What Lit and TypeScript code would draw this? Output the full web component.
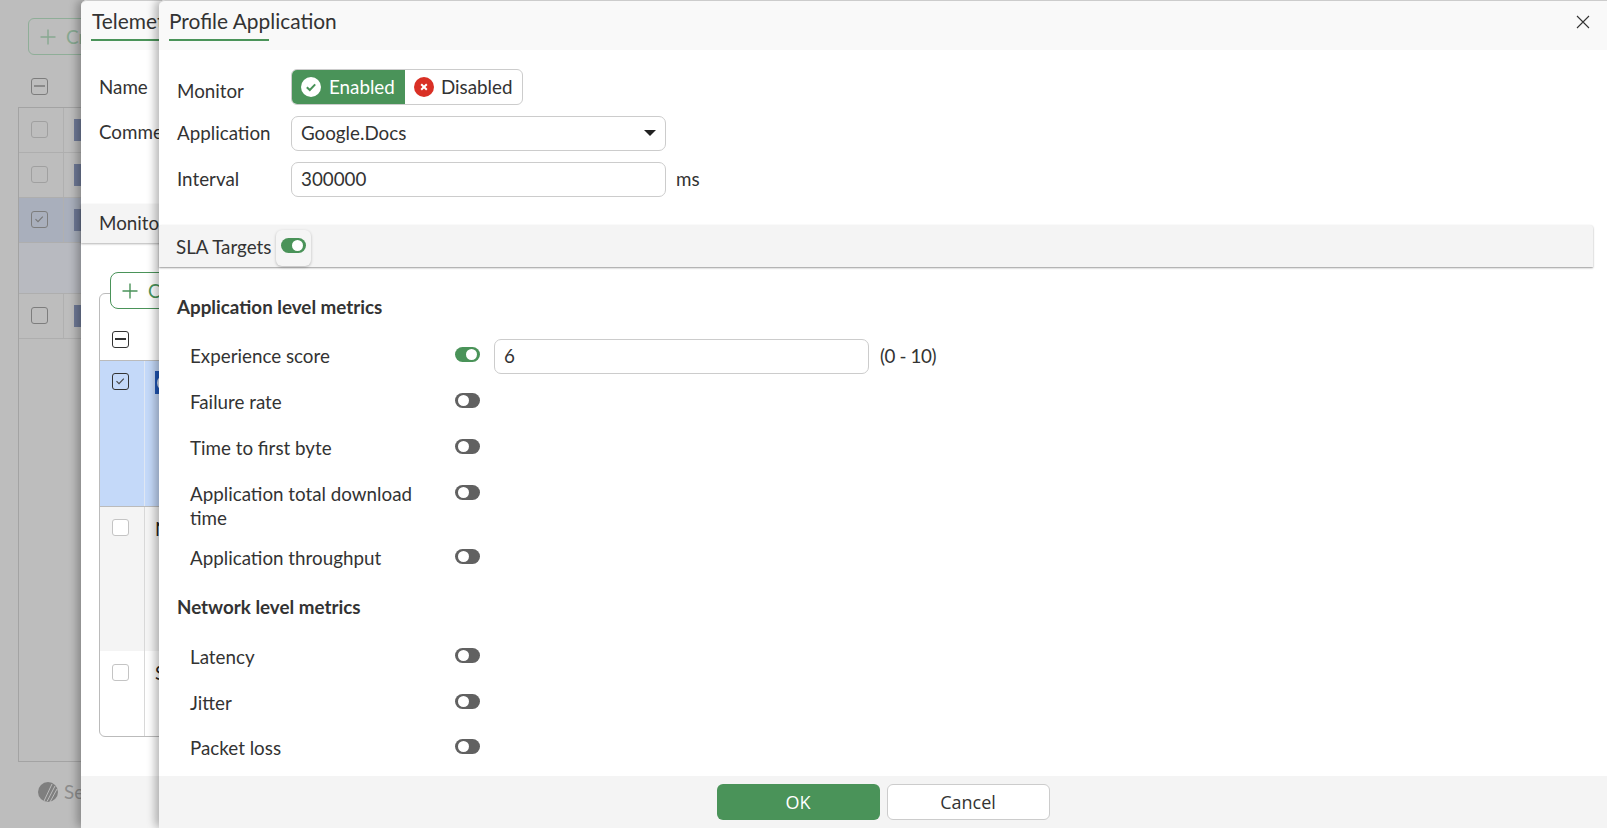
import { LitElement, html, css, svg } from "lit";
import { customElement } from "lit/decorators.js";

const plus = svg`<svg class="plus" width="20" height="20" viewBox="0 0 20 20" fill="none" stroke="currentColor" stroke-width="1.4"><path d="M10 2.5v15M2.5 10h15"/></svg>`;

@customElement("app-root")
export class AppRoot extends LitElement {
  static styles = css`
    :host { display: block; position: relative; width: 1607px; height: 828px; overflow: hidden; font-family: Lato, sans-serif; font-size: 18.8px; line-height: 24px; color: #333; background: #bdbdbd; }
    * { box-sizing: border-box; }
    .plus { flex: none; display: block; }

    /* page behind the drawers */
    .page { display: flex; flex-direction: column; height: 828px; padding: 18px 0 0 18px; color: #8a8a8a; }
    .create { width: 120px; height: 37px; margin-left: 10px; border: 1px solid #8fae98; border-radius: 6px; display: flex; align-items: center; gap: 8px; padding-left: 9px; color: #87a890; white-space: nowrap; }
    .page-head { height: 52px; padding: 23px 0 0 13px; }
    .bgtable { width: 300px; height: 655px; border: 1px solid #a3a3a3; border-right: 0; }
    .bgrow { display: flex; border-bottom: 1px solid #aeaeae; height: 45px; }
    .bgrow.sel { background: #a9afbc; }
    .bgrow.sub { background: #b8bac0; height: 51px; }
    .bgrow .c1 { width: 45px; padding: 12.5px 0 0 12px; border-right: 1px solid #b0b0b0; }
    .bgrow .chip { width: 10px; height: 22px; margin: 11px 0 0 10px; background: #6f7a97; }
    .box { display: block; width: 17px; height: 17px; border: 1.5px solid #a0a0a0; border-radius: 3px; }
    .box.dark { border-color: #7d7d7d; position: relative; }
    .box.minus::after { content: ""; position: absolute; left: 2px; right: 2px; top: 6px; height: 2px; background: currentColor; }
    .box svg { display: block; }
    .brand { display: flex; align-items: center; gap: 6px; padding: 18px 0 0 20px; color: #8c8c8c; white-space: nowrap; }

    /* drawers */
    .drawer { position: absolute; top: 0; bottom: 0; right: 0; background: #fff; border-radius: 6px 0 0 6px; display: flex; flex-direction: column; box-shadow: -4px 0 8px rgba(0,0,0,.28); }
    .d1 { left: 81px; }
    .d2 { left: 159px; }
    .dhead { height: 50px; flex: none; background: #f9f9f9; border-top: 1px solid #ccc; border-radius: 6px 0 0 0; position: relative; padding: 8px 0 0 10px; display: flex; justify-content: space-between; }
    .title { font-size: 20.9px; height: 32px; width: 100px; white-space: nowrap; border-bottom: 2px solid #4a9359; }
    .d1 .title { padding-left: 1px; }
    .close { padding: 6px 17px 0 0; display: block; height: 20px; }
    .close svg { display: block; }
    .dbody { flex: 1; min-height: 0; display: flex; flex-direction: column; }
    .dfoot { height: 52px; flex: none; background: #f4f4f4; display: flex; justify-content: center; align-items: flex-start; gap: 7px; padding-top: 8px; }

    /* drawer one */
    .d1 .dbody { padding-top: 25px; }
    .d1 .lab { padding-left: 18px; height: 45px; }
    .d1 .section { margin-top: 39px; height: 39px; background: #f4f4f4; padding: 7px 0 0 18px; box-shadow: 0 1px 2px rgba(0,0,0,.3); }
    .d1 .panel { margin: 50px 0 0 18px; height: 444px; border: 1px solid #bbb; border-radius: 6px; display: flex; flex-direction: column; }
    .d1 .tool { height: 0; padding-left: 10px; }
    .create2 { width: 120px; height: 37px; margin-top: -22px; border: 1px solid #4a9359; border-radius: 8px; background: #fff; display: flex; align-items: center; gap: 8px; padding-left: 9px; color: #4a9359; white-space: nowrap; }
    .thead { height: 67px; padding: 37px 0 0 12px; border-bottom: 1px solid #bbb; color: #222; flex: none; }
    .thead .box { border-color: #333; }
    .trow { display: flex; flex: none; }
    .trow .c1 { width: 45px; padding: 12px 0 0 12px; border-right: 1px solid #d8d8d8; }
    .trow .c2 { flex: 1; padding: 10px 0 0 10px; color: #222; }
    .trow.a { height: 146px; background: #c4d9f9; border-bottom: 1px solid #bbb; }
    .trow.a .c1 { border-right-color: #dfe7f3; }
    .trow.b { height: 144px; background: #f4f4f4; }
    .trow.c { flex: 1; }
    .trow.c .c1 { padding-top: 13px; }
    .tbox { display: block; width: 17px; height: 17px; border: 1.5px solid #c4c4c4; border-radius: 3px; background: #fff; }
    .tbox.on { background: transparent; border-color: #333; color: #333; }
    .tbox svg { display: block; }
    .bluechip { width: 24px; height: 23px; background: #1f55b5; display: flex; align-items: center; padding-left: 2px; }
    .bluechip::before { content: ""; width: 12px; height: 12px; border-radius: 50%; border: 2px solid #d5dff0; }

    /* drawer two */
    .form { padding: 19px 0 0 18px; display: grid; grid-template-columns: 114px auto; row-gap: 11px; justify-content: start; align-items: center; }
    .mlab { padding-top: 7px; }
    .lbl { padding-bottom: 2px; }
    .toggle-group { display: inline-flex; height: 36px; width: 232px; border: 1px solid #ccc; border-radius: 6px; background: #fff; overflow: hidden; }
    .seg { display: flex; align-items: center; gap: 7px; padding-left: 9px; }
    .seg.on { width: 114px; margin: -1px 0 -1px -1px; padding-left: 10px; gap: 8px; background: #4a9359; color: #fff; border-radius: 6px 0 0 6px; }
    .seg svg { display: block; flex: none; }
    .field { width: 375px; height: 35px; border: 1px solid #ccc; border-radius: 7px; background: #fff; padding: 4px 0 0 9px; position: relative; }
    .caret { position: absolute; right: 9px; top: 13px; width: 0; height: 0; border: 6px solid transparent; border-top: 6px solid #222; border-bottom: 0; }
    .with-unit { display: flex; align-items: center; gap: 10px; }
    .sla { margin-top: 28px; width: 1434px; height: 42px; flex: none; background: #f4f4f4; border-radius: 3px 3px 0 0; box-shadow: 0 1px 2px rgba(0,0,0,.4); display: flex; align-items: center; padding: 2px 0 0 17px; gap: 5px; }
    .chipw { width: 35px; height: 36px; border-radius: 6px; background: #f5f5f5; box-shadow: 0 1px 3px rgba(0,0,0,.25); display: flex; align-items: center; justify-content: center; margin-top: 1px; }
    .chipw .sw { margin-top: -4px; }
    .metrics { padding: 28px 0 0 18px; }
    .mh { font-weight: 700; height: 24px; margin-bottom: 20px; }
    .mh.net { margin-top: 19px; margin-bottom: 21px; }
    .mrow { display: flex; margin-bottom: 11px; padding-left: 13px; min-height: 35px; align-items: flex-start; }
    .mrow.tight { margin-bottom: 10px; }
    .mrow.last { margin-bottom: 0; }
    .mlabel { width: 265px; flex: none; padding: 5px 30px 0 0; }
    .sw { display: block; width: 25px; height: 15px; border-radius: 8px; background: #616161; position: relative; flex: none; }
    .mrow .sw { margin-top: 8px; }
    .sw::after { content: ""; position: absolute; left: 3px; top: 2px; width: 11px; height: 11px; border-radius: 50%; background: #fff; }
    .sw.on { background: #4a9359; }
    .sw.on::after { left: 11px; }
    .mrow .with-unit { margin-left: 14px; gap: 11px; }
    .range { letter-spacing: -0.4px; padding-bottom: 2px; }
    .btn { width: 163px; height: 36px; border-radius: 6px; font-size: 18px; display: flex; align-items: center; justify-content: center; font-family: "Open Sans", sans-serif; }
    .btn.ok { background: #4a9359; color: #fff; }
    .btn.cancel { background: #fff; border: 1px solid #ccc; color: #333; }
  `;

  private check(size = 13, color = "#555") {
    return svg`<svg width="${size}" height="${size}" viewBox="0 0 14 14" fill="none" stroke="${color}" stroke-width="1.1"><path d="M3.5 7.2 6 9.6l4.8-5"/></svg>`;
  }

  private metric(label: string, on = false, cls = "") {
    return html`<div class="mrow ${cls}">
      <div class="mlabel">${label}</div>
      <span class="sw ${on ? "on" : ""}"></span>
      ${on ? html`<div class="with-unit"><div class="field">6</div><span class="range">(0 - 10)</span></div>` : null}
    </div>`;
  }

  render() {
    return html`
      <div class="page">
        <div class="create">${plus}<span>Create New</span></div>
        <div class="page-head"><span class="box dark minus"></span></div>
        <div class="bgtable">
          <div class="bgrow"><div class="c1"><span class="box"></span></div><div class="chip"></div></div>
          <div class="bgrow"><div class="c1"><span class="box"></span></div><div class="chip"></div></div>
          <div class="bgrow sel"><div class="c1"><span class="box dark">${this.check(14, "#777")}</span></div><div class="chip"></div></div>
          <div class="bgrow sub"></div>
          <div class="bgrow"><div class="c1"><span class="box dark"></span></div><div class="chip"></div></div>
        </div>
        <div class="brand">
          <svg width="20" height="20" viewBox="0 0 20 20"><circle cx="10" cy="10" r="10" fill="#7f7f7f"/><path d="M6 19 14 2M9 19.5 17 4M12 20 19 7" stroke="#bdbdbd" stroke-width="1"/></svg>
          <span>Security Rating Issues</span>
        </div>
      </div>

      <section class="drawer d1">
        <div class="dhead"><div class="title">Telemetry SLA</div></div>
        <div class="dbody">
          <div class="lab">Name</div>
          <div class="lab">Comments</div>
          <div class="section">Monitors</div>
          <div class="panel">
            <div class="tool"><div class="create2">${plus}<span>Create New</span></div></div>
            <div class="thead"><span class="tbox on box dark minus"></span></div>
            <div class="trow a"><div class="c1"><span class="tbox on">${this.check(14, "#444")}</span></div><div class="c2"><div class="bluechip"></div></div></div>
            <div class="trow b"><div class="c1"><span class="tbox"></span></div><div class="c2">Name</div></div>
            <div class="trow c"><div class="c1"><span class="tbox"></span></div><div class="c2">Site</div></div>
          </div>
        </div>
        <div class="dfoot"></div>
      </section>

      <section class="drawer d2">
        <div class="dhead">
          <div class="title">Profile Application</div>
          <span class="close"><svg width="14" height="14" viewBox="0 0 14 14" stroke="#333" stroke-width="1.1"><path d="M1 1l12 12M13 1 1 13"/></svg></span>
        </div>
        <div class="dbody">
          <div class="form">
            <div class="mlab">Monitor</div>
            <div class="toggle-group">
              <div class="seg on">
                <svg width="20" height="20" viewBox="0 0 20 20"><circle cx="10" cy="10" r="10" fill="#fff"/><path d="M5.8 10.2 8.8 13l5.4-5.6" fill="none" stroke="#4a9359" stroke-width="2"/></svg>
                <span>Enabled</span>
              </div>
              <div class="seg">
                <svg width="20" height="20" viewBox="0 0 20 20"><circle cx="10" cy="10" r="10" fill="#d93025"/><path d="M7.2 7.2l5.6 5.6M12.8 7.2l-5.6 5.6" stroke="#fff" stroke-width="2"/></svg>
                <span>Disabled</span>
              </div>
            </div>
            <div class="lbl">Application</div>
            <div class="field">Google.Docs<span class="caret"></span></div>
            <div class="lbl">Interval</div>
            <div class="with-unit"><div class="field">300000</div><span class="lbl">ms</span></div>
          </div>
          <div class="sla"><span>SLA Targets</span><span class="chipw"><span class="sw on"></span></span></div>
          <div class="metrics">
            <div class="mh">Application level metrics</div>
            ${this.metric("Experience score", true)}
            ${this.metric("Failure rate")}
            ${this.metric("Time to first byte")}
            ${this.metric("Application total download time")}
            ${this.metric("Application throughput", false, "last")}
            <div class="mh net">Network level metrics</div>
            ${this.metric("Latency")}
            ${this.metric("Jitter", false, "tight")}
            ${this.metric("Packet loss", false, "last")}
          </div>
        </div>
        <div class="dfoot">
          <div class="btn ok">OK</div>
          <div class="btn cancel">Cancel</div>
        </div>
      </section>
    `;
  }
}
